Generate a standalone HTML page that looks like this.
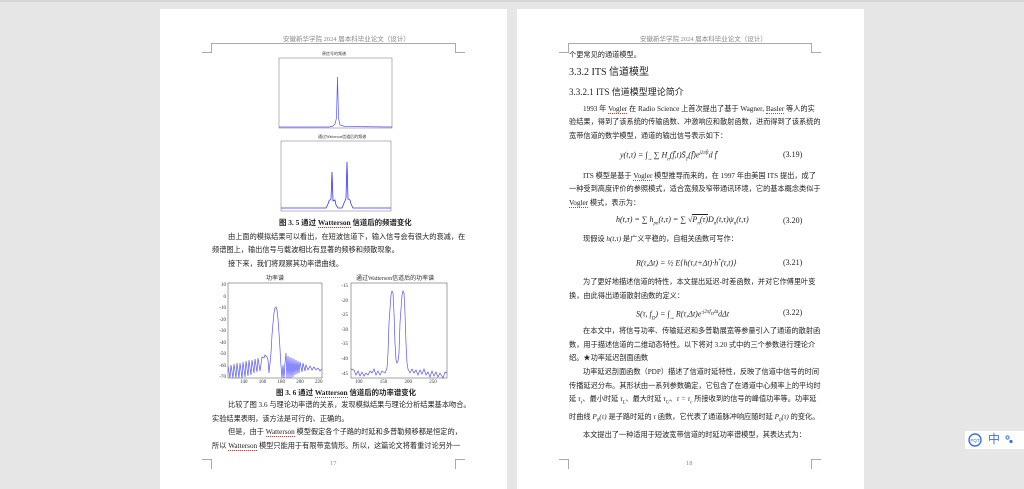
<!DOCTYPE html>
<html><head><meta charset="utf-8"><style>
*{margin:0;padding:0;box-sizing:border-box}
body{width:1024px;height:483px;background:#e6e6e6;position:relative;overflow:hidden;font-family:"Liberation Serif","Noto Sans CJK SC",serif;color:#222}
.pg{position:absolute;top:9px;width:347px;height:480px;background:#fff}
.t{position:absolute;font-size:7.2px;line-height:12px;white-space:nowrap}
.j{text-align:justify;text-align-last:justify;text-justify:inter-character}
.L1{left:228px;width:227px}.L0{left:212px;width:243px}
.R1{left:583px;width:228px}.R0{left:569px;width:242px}
.h{position:absolute;font-size:6.5px;color:#888;white-space:nowrap}
.u{border-bottom:1px dotted #d33}
.c{position:absolute;border-color:#aaa;border-style:solid;width:10px;height:10px}
.cap{position:absolute;font-size:7.4px;font-weight:bold;white-space:nowrap}
svg{position:absolute;overflow:visible}
</style></head><body>
<div style="position:absolute;left:0;top:0;width:1024px;height:2px;background:#d6d6d6"></div>
<div class="pg" style="left:160px"></div>
<div class="pg" style="left:517px"></div>

<!-- LEFT PAGE -->
<div class="h" style="left:283px;top:33px">安徽新华学院 2024 届本科毕业论文（设计）</div>
<div style="position:absolute;left:212px;top:43px;width:244px;border-top:1px solid #aaa"></div>
<div class="c" style="left:202px;top:43px;border-width:0 1px 1px 0"></div>
<div class="c" style="left:455px;top:43px;border-width:0 0 1px 1px"></div>

<div class="h" style="left:322px;top:51px;font-size:4px;color:#333">原信号的频谱</div>
<svg style="left:279px;top:58px" width="113" height="70">
<rect x="0" y="0" width="113" height="70" fill="none" stroke="#888" stroke-width=".6"/>
<path d="M0 69 L50 69 L54 68 L56 66 L57.5 60 L58.5 19 L59.5 60 L61 67 L66 68.5 L113 69" fill="none" stroke="#55f" stroke-width=".7"/>
</svg>
<div class="h" style="left:318px;top:134px;font-size:4px;color:#333">通过Watterson信道后的频谱</div>
<svg style="left:281px;top:141px" width="110" height="70">
<rect x="0" y="0" width="110" height="70" fill="none" stroke="#888" stroke-width=".6"/>
<path d="M0 67 L45 67 L47 63 L48 60 L50 58 L51 31 L52 60 L54 59 L55 64 L57 67 L61 67 L63 62 L64 60 L65 57 L66 21 L67 58 L69 59 L70 63 L72 67 L110 67" fill="none" stroke="#33f" stroke-width=".8"/>
</svg>
<div class="cap" style="left:279px;top:217px">图 3. 5 通过 <span class="u">Watterson</span> 信道后的频谱变化</div>
<div class="t j L1" style="top:231px">由上面的模拟结果可以看出，在短波信道下，输入信号会有很大的衰减，在</div>
<div class="t" style="left:212px;top:244px">频谱图上，输出信号与载波相比有显著的频移和频散现象。</div>
<div class="t" style="left:228px;top:258px">接下来，我们将观察其功率谱曲线。</div>

<div class="h" style="left:266px;top:273px;color:#333;font-size:6px">功率谱</div>
<svg style="left:228px;top:283px" width="94" height="95">
<rect x="0" y="0" width="94" height="95" fill="none" stroke="#666" stroke-width=".6"/>
<path d="M0 83 L2 95 L3 82 L5 95 L6 81 L8 95 L9 80 L11 95 L12 80 L14 95 L15 79 L17 94 L18 78 L20 93 L21 77 L23 92 L24 77 L26 90 L27 76 L29 89 L30 75 L32 88 L34 74 L36 75 L37 72 L39 74 L40 77 L41 90 L42 80 L43 70 L44 52 L45 40 L46 30 L47 25 L48 24 L49 27 L50 36 L51 50 L52 66 L53 83 L54 95 L55 82 L56 95 L57 80 L58 70 L59 95 L60 73 L61 95 L62 74 L63 95 L64 75 L65 94 L66 76 L67 92 L68 77 L69 91 L70 78 L71 90 L72 79 L74 89 L75 80 L77 88 L78 82 L80 87 L82 83 L84 87 L86 84 L88 87 L90 85 L92 88 L94 86" fill="none" stroke="#55f" stroke-width=".7"/>
</svg>
<div class="h" style="left:214px;top:280px;font-size:5px;color:#333;line-height:11.5px;text-align:right;width:12px">10<br>0<br>-10<br>-20<br>-30<br>-40<br>-50<br>-60<br>-70</div>
<div class="h" style="left:240px;top:380px;font-size:5px;color:#333;word-spacing:10px">140 160 180 200 220</div>

<div class="h" style="left:356px;top:273px;color:#333;font-size:6px">通过Watterson信道后的功率谱</div>
<svg style="left:351px;top:283px" width="96" height="95">
<rect x="0" y="0" width="96" height="95" fill="none" stroke="#666" stroke-width=".6"/>
<path d="M0 86 L3 87 L5 92 L7 88 L9 93 L11 89 L13 93 L15 90 L17 92 L19 88 L21 90 L23 86 L25 92 L27 88 L29 92 L31 88 L34 90 L36 85 L37 70 L38 40 L40 12 L41 8 L42 10 L43 30 L44 60 L45 77 L46 80 L47 78 L48 70 L49 40 L51 12 L52 8 L53 10 L54 30 L55 60 L56 80 L57 86 L59 90 L61 86 L63 90 L65 87 L67 92 L69 87 L71 91 L73 86 L75 92 L77 89 L79 94 L81 88 L83 93 L85 89 L87 94 L89 90 L92 95 L94 89 L96 90" fill="none" stroke="#55f" stroke-width=".7"/>
</svg>
<div class="h" style="left:334px;top:280px;font-size:5px;color:#333;line-height:14.6px;text-align:right;width:14px">-15<br>-20<br>-25<br>-30<br>-35<br>-40<br>-45</div>
<div class="h" style="left:355px;top:380px;font-size:5px;color:#333;word-spacing:16px">100 150 200 250</div>

<div class="cap" style="left:276px;top:387px">图 3. 6 通过 <span class="u">Watterson</span> 信道后的功率谱变化</div>
<div class="t j L1" style="top:399px">比较了图 3.6 与理论功率谱的关系，发现模拟结果与理论分析结果基本吻合。</div>
<div class="t" style="left:212px;top:413px">实验结果表明，该方法是可行的、正确的。</div>
<div class="t j L1" style="top:426px">但是，由于 <span class="u">Watterson</span> 模型假定各个子路的时延和多普勒频移都是恒定的，</div>
<div class="t j L0" style="top:440px">所以 <span class="u">Watterson</span> 模型只能用于有限带宽情形。所以，这篇论文将着重讨论另外一</div>
<div class="c" style="left:202px;top:459px;border-width:1px 1px 0 0"></div>
<div class="c" style="left:455px;top:459px;border-width:1px 0 0 1px"></div>
<div class="h" style="left:330px;top:460px">17</div>

<!-- RIGHT PAGE -->
<div class="h" style="left:640px;top:33px">安徽新华学院 2024 届本科毕业论文（设计）</div>
<div style="position:absolute;left:569px;top:43px;width:243px;border-top:1px solid #aaa"></div>
<div class="c" style="left:559px;top:43px;border-width:0 1px 1px 0"></div>
<div class="c" style="left:811px;top:43px;border-width:0 0 1px 1px"></div>
<div class="t" style="left:569px;top:49px">个更常见的通道模型。</div>
<div class="t" style="left:569px;top:66px;font-size:10px;line-height:14px">3.3.2 ITS 信道模型</div>
<div class="t" style="left:569px;top:86px;font-size:9px;line-height:13px">3.3.2.1 ITS 信道模型理论简介</div>
<div class="t j R1" style="top:103px">1993 年 <span class="u">Vogler</span> 在 Radio Science 上首次提出了基于 Wagner, <span class="u">Basler</span> 等人的实</div>
<div class="t j R0" style="top:116px">验结果，得到了该系统的传输函数、冲激响应和散射函数，进而得到了该系统的</div>
<div class="t" style="left:569px;top:130px">宽带信道的数学模型，通道的输出信号表示如下：</div>
<div class="t" style="left:620px;top:148px;font-style:italic;font-size:8px">y(t,τ) = ∫<sub style="font-size:4px">-∞</sub> ∑ H<sub style="font-size:5px">n</sub>(f̄,t)S̄<sub style="font-size:5px">T</sub>(f̄)e<sup style="font-size:5px">j2πf̄t</sup>d f̄</div>
<div class="t" style="left:783px;top:149px;font-size:8px">(3.19)</div>
<div class="t j R1" style="top:170px">ITS 模型是基于 <span class="u">Vogler</span> 模型推导而来的，在 1997 年由美国 ITS 提出，成了</div>
<div class="t j R0" style="top:183px">一种受到高度评价的参照模式，适合宽频及窄带通讯环境，它的基本概念类似于</div>
<div class="t" style="left:569px;top:197px"><span class="u">Vogler</span> 模式，表示为：</div>
<div class="t" style="left:616px;top:214px;font-style:italic;font-size:8px">h(t,τ) = ∑ h<sub style="font-size:5px">pn</sub>(t,τ) = ∑ √<span style="border-top:1px solid #222">P<sub style="font-size:5px">n</sub>(τ)</span>D<sub style="font-size:5px">n</sub>(t,τ)ψ<sub style="font-size:5px">n</sub>(t,τ)</div>
<div class="t" style="left:783px;top:215px;font-size:8px">(3.20)</div>
<div class="t" style="left:583px;top:233px">现假设 <i>h(t,τ)</i> 是广义平稳的，自相关函数可写作：</div>
<div class="t" style="left:636px;top:256px;font-style:italic;font-size:8px">R(τ,Δt) = ½ E{h(τ,t+Δt)·h<sup style="font-size:5px">*</sup>(τ,t)}</div>
<div class="t" style="left:783px;top:257px;font-size:8px">(3.21)</div>
<div class="t j R1" style="top:276px">为了更好地描述信道的特性，本文提出延迟-时差函数，并对它作傅里叶变</div>
<div class="t" style="left:569px;top:290px">换，由此得出通道散射函数的定义：</div>
<div class="t" style="left:636px;top:307px;font-style:italic;font-size:8px">S(τ, f<sub style="font-size:5px">D</sub>) = ∫<sub style="font-size:4px">-∞</sub> R(τ,Δt)e<sup style="font-size:5px">-j2πf<sub>D</sub>Δt</sup>dΔt</div>
<div class="t" style="left:783px;top:307px;font-size:8px">(3.22)</div>
<div class="t j R1" style="top:325px">在本文中，将信号功率、传输延迟和多普勒展宽等参量引入了通道的散射函</div>
<div class="t j R0" style="top:339px">数，用于描述信道的二维动态特性。以下将对 3.20 式中的三个参数进行理论介</div>
<div class="t" style="left:569px;top:352px">绍。★功率延迟剖面函数</div>
<div class="t j R1" style="top:366px">功率延迟剖面函数（PDP）描述了信道时延特性，反映了信道中信号的时间</div>
<div class="t j R0" style="top:380px">传播延迟分布。其形状由一系列参数确定，它包含了在通道中心频率上的平均时</div>
<div class="t j R0" style="top:393px">延 <i>τ<sub style="font-size:5px">τ</sub></i>、最小时延 <i>τ<sub style="font-size:5px">L</sub></i>、最大时延 <i>τ<sub style="font-size:5px">U</sub></i>、<i>τ = τ<sub style="font-size:5px">c</sub></i> 所接收到的信号的峰值功率等。功率延</div>
<div class="t" style="left:569px;top:411px">时曲线 <i>P<sub style="font-size:5px">0</sub>(τ)</i> 是子路时延的 <i>τ</i> 函数，它代表了通道脉冲响应随时延 <i>P<sub style="font-size:5px">0</sub>(τ)</i> 的变化。</div>
<div class="t" style="left:583px;top:429px">本文提出了一种适用于短波宽带信道的时延功率谱模型，其表达式为：</div>
<div class="c" style="left:559px;top:459px;border-width:1px 1px 0 0"></div>
<div class="c" style="left:811px;top:459px;border-width:1px 0 0 1px"></div>
<div class="h" style="left:686px;top:460px">18</div>

<!-- IME widget -->
<div style="position:absolute;left:965px;top:431px;width:59px;height:18px;background:#fff"></div>
<svg style="left:968px;top:433px" width="14" height="14"><circle cx="7" cy="7" r="6" fill="none" stroke="#3b6ee8" stroke-width="1.4"/><text x="7" y="8.8" font-size="4.5" fill="#3b6ee8" text-anchor="middle" font-family="Liberation Sans">PQT</text></svg>
<div style="position:absolute;left:988px;top:432px;font-size:12px;line-height:14px;color:#3b6ee8;font-family:'Noto Sans CJK SC',sans-serif">中</div>
<svg style="left:1005px;top:435px" width="10" height="10"><circle cx="2.5" cy="2.5" r="1.6" fill="none" stroke="#3b6ee8" stroke-width="1"/><circle cx="6" cy="6.5" r="1.6" fill="#3b6ee8"/></svg>
</body></html>
